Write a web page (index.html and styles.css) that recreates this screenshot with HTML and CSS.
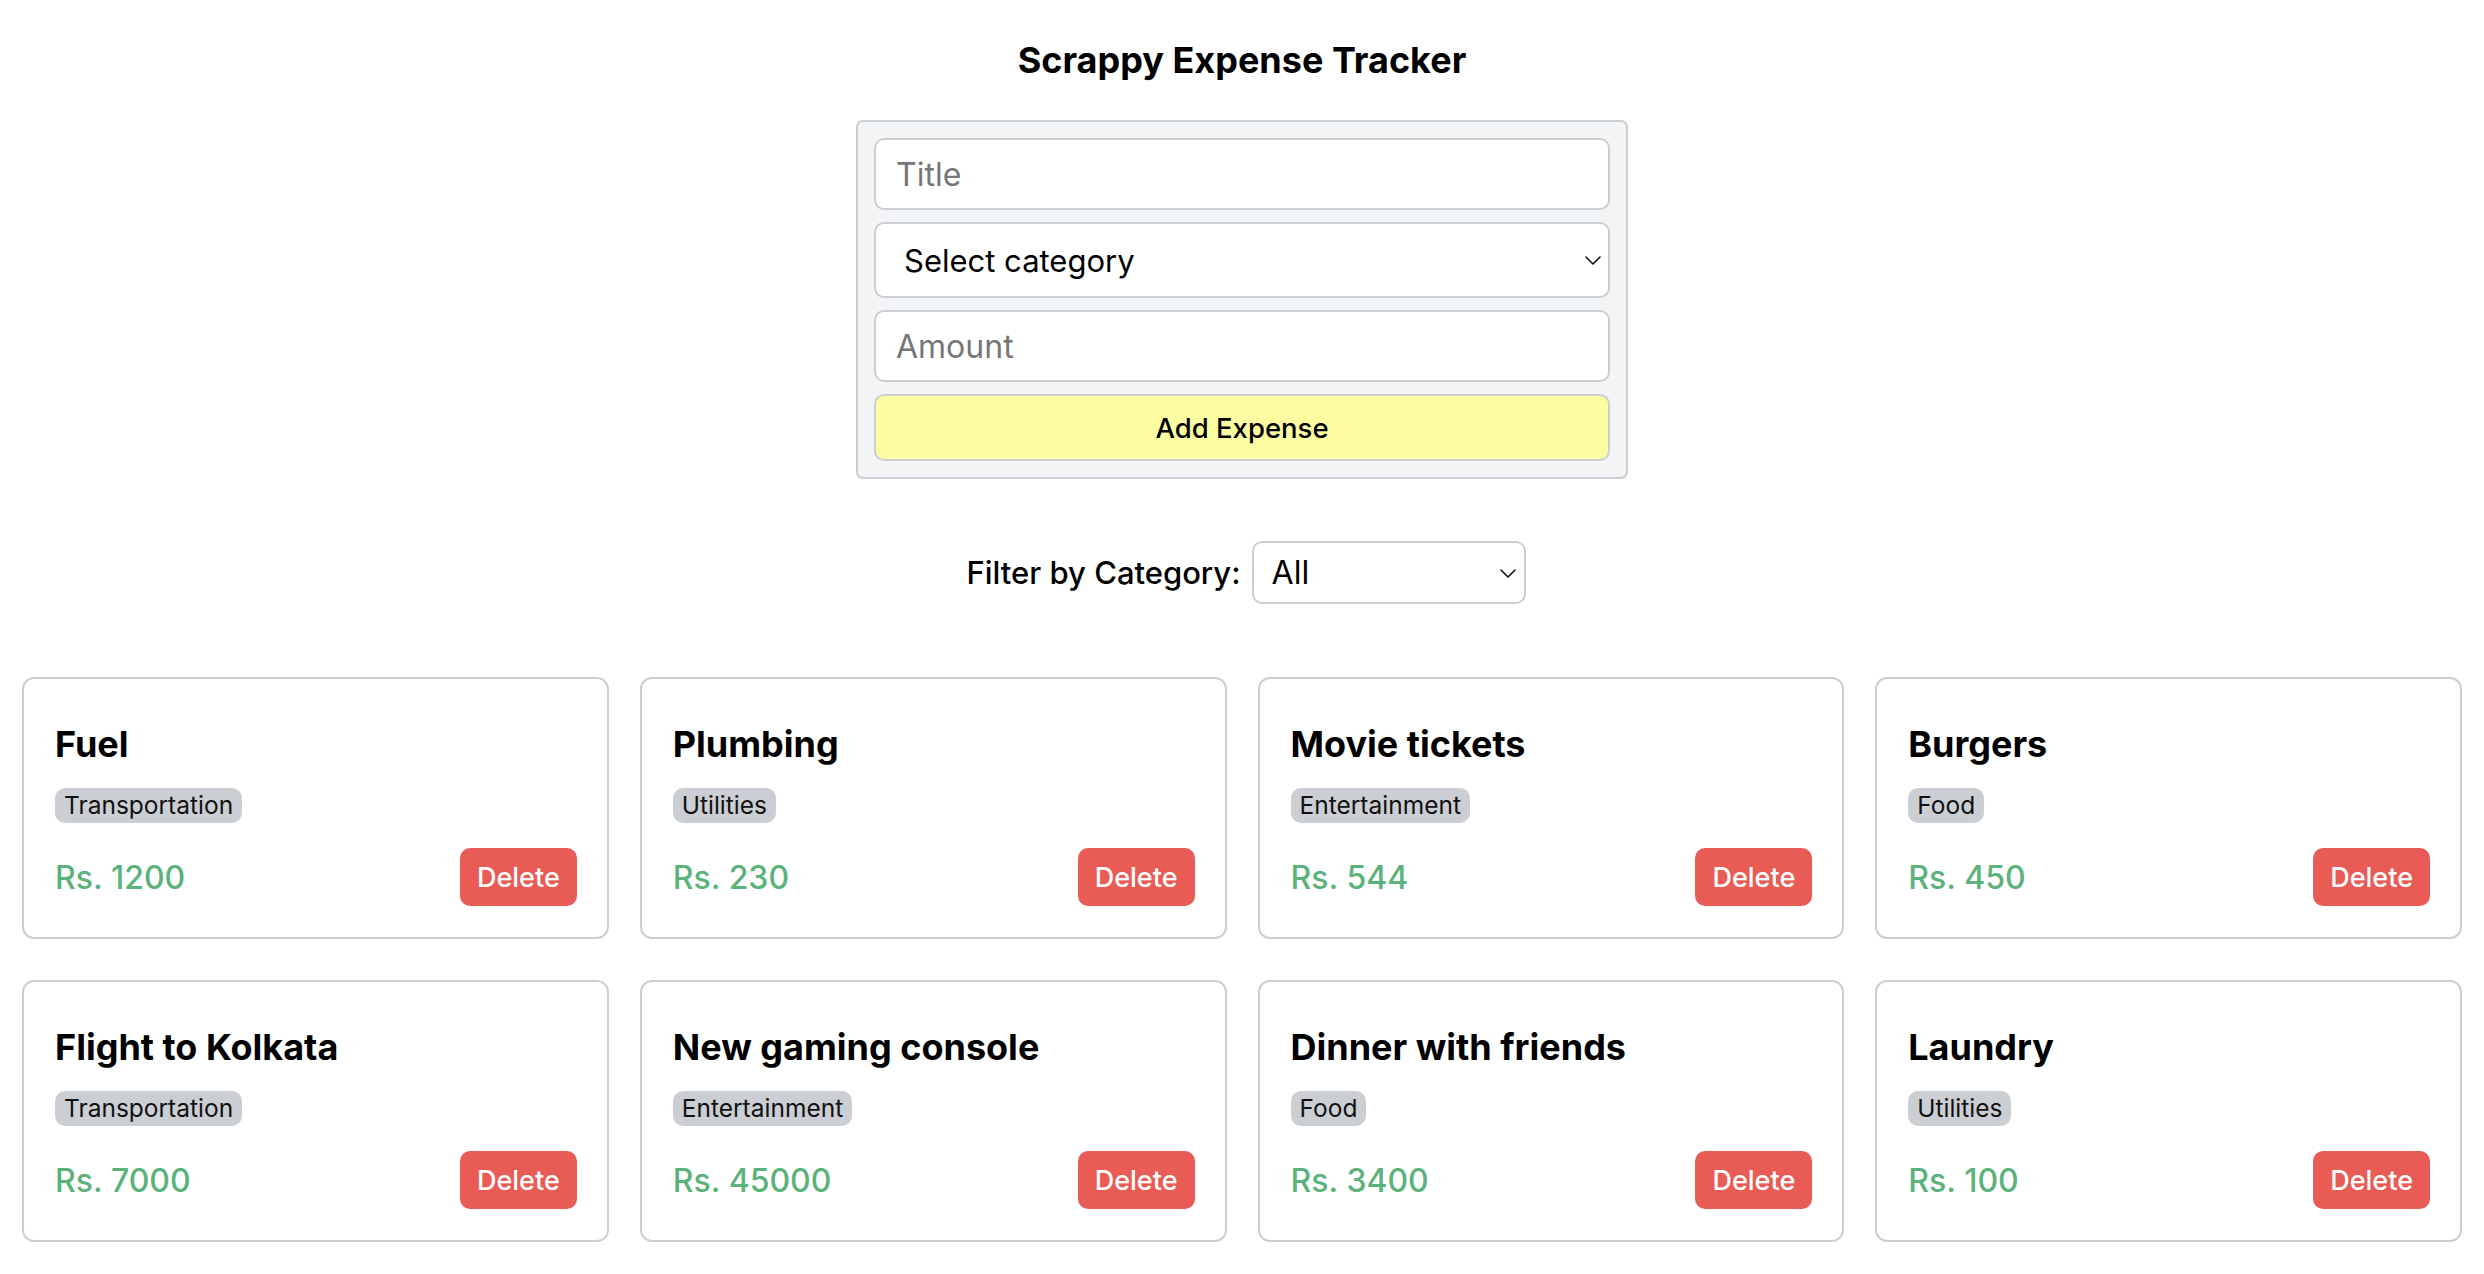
FILE: index.html
```html
<!DOCTYPE html>
<html lang="en">
<head>
<meta charset="utf-8">
<title>Scrappy Expense Tracker</title>
<link rel="stylesheet" href="styles.css">
</head>
<body>
<main class="app">
  <h1 class="app-title">Scrappy Expense Tracker</h1>

  <form class="expense-form">
    <input class="field field-input" type="text" placeholder="Title">
    <div class="select-wrap">
      <select class="field field-select">
        <option>Select category</option>
        <option>Food</option>
        <option>Transportation</option>
        <option>Utilities</option>
        <option>Entertainment</option>
      </select>
      <svg class="chevron" viewBox="0 0 16 9" width="16" height="9" aria-hidden="true"><path d="M1 1l7 7 7-7" fill="none" stroke="#111" stroke-width="1.6" stroke-linecap="round" stroke-linejoin="round"/></svg>
    </div>
    <input class="field field-input" type="text" placeholder="Amount">
    <button type="button" class="add-btn">Add Expense</button>
  </form>

  <div class="filter">
    <label class="filter-label" for="filter">Filter by Category:</label>
    <div class="select-wrap">
      <select id="filter" class="filter-select">
        <option>All</option>
        <option>Food</option>
        <option>Transportation</option>
        <option>Utilities</option>
        <option>Entertainment</option>
      </select>
      <svg class="chevron chevron-filter" viewBox="0 0 16 9" width="16" height="9" aria-hidden="true"><path d="M1 1l7 7 7-7" fill="none" stroke="#111" stroke-width="1.6" stroke-linecap="round" stroke-linejoin="round"/></svg>
    </div>
  </div>

  <section class="cards">
    <article class="card">
      <h2 class="card-title">Fuel</h2>
      <span class="badge">Transportation</span>
      <div class="card-row"><span class="amount">Rs. 1200</span><button type="button" class="delete-btn">Delete</button></div>
    </article>
    <article class="card">
      <h2 class="card-title">Plumbing</h2>
      <span class="badge">Utilities</span>
      <div class="card-row"><span class="amount">Rs. 230</span><button type="button" class="delete-btn">Delete</button></div>
    </article>
    <article class="card">
      <h2 class="card-title">Movie tickets</h2>
      <span class="badge">Entertainment</span>
      <div class="card-row"><span class="amount">Rs. 544</span><button type="button" class="delete-btn">Delete</button></div>
    </article>
    <article class="card">
      <h2 class="card-title">Burgers</h2>
      <span class="badge">Food</span>
      <div class="card-row"><span class="amount">Rs. 450</span><button type="button" class="delete-btn">Delete</button></div>
    </article>
    <article class="card">
      <h2 class="card-title">Flight to Kolkata</h2>
      <span class="badge">Transportation</span>
      <div class="card-row"><span class="amount">Rs. 7000</span><button type="button" class="delete-btn">Delete</button></div>
    </article>
    <article class="card">
      <h2 class="card-title">New gaming console</h2>
      <span class="badge">Entertainment</span>
      <div class="card-row"><span class="amount">Rs. 45000</span><button type="button" class="delete-btn">Delete</button></div>
    </article>
    <article class="card">
      <h2 class="card-title">Dinner with friends</h2>
      <span class="badge">Food</span>
      <div class="card-row"><span class="amount">Rs. 3400</span><button type="button" class="delete-btn">Delete</button></div>
    </article>
    <article class="card">
      <h2 class="card-title">Laundry</h2>
      <span class="badge">Utilities</span>
      <div class="card-row"><span class="amount">Rs. 100</span><button type="button" class="delete-btn">Delete</button></div>
    </article>
  </section>
</main>
</body>
</html>
```

FILE: styles.css
```css
html, body {
  margin: 0;
  padding: 0;
  background: #ffffff;
  color: #000000;
  font-family: Inter, "Liberation Sans", Arial, sans-serif;
}

.app {
  padding: 32px 22px 32px;
}

.app-title {
  margin: 0 0 32px;
  text-align: center;
  font-size: 36px;
  line-height: 56px;
  font-weight: 700;
}

.expense-form {
  box-sizing: border-box;
  width: 772px;
  margin: 0 auto;
  padding: 16px;
  background: #f3f4f6;
  border: 2px solid #cbced3;
  border-radius: 7px;
  display: flex;
  flex-direction: column;
  gap: 12px;
}

.field {
  box-sizing: border-box;
  display: block;
  width: 100%;
  height: 72px;
  padding: 0 20px;
  border: 2px solid #cbced3;
  border-radius: 10px;
  background: #ffffff;
  color: #000000;
  font-family: inherit;
  font-size: 32px;
  outline: none;
}

.field::placeholder {
  color: #767676;
}

.select-wrap {
  position: relative;
}

.field-select {
  height: 76px;
  padding-left: 28px;
  font-size: 31px;
  appearance: none;
  -webkit-appearance: none;
}

.chevron {
  position: absolute;
  right: 9px;
  top: 50%;
  margin-top: -4px;
  pointer-events: none;
}

.chevron-filter {
  right: 10px;
}

.add-btn {
  box-sizing: border-box;
  height: 67px;
  border: 2px solid #cbced3;
  border-radius: 10px;
  background: #fcfca1;
  color: #000000;
  font-family: inherit;
  font-size: 27.5px;
  font-weight: 500;
}

.filter {
  margin-top: 62px;
  display: flex;
  justify-content: center;
  align-items: center;
  gap: 11px;
  padding-left: 8px;
}

.filter-label {
  font-size: 31px;
  font-weight: 500;
}

.filter-select {
  box-sizing: border-box;
  display: block;
  width: 274px;
  height: 63px;
  padding: 0 18px;
  border: 2px solid #cbced3;
  border-radius: 10px;
  background: #ffffff;
  color: #000000;
  font-family: inherit;
  font-size: 32px;
  appearance: none;
  -webkit-appearance: none;
  outline: none;
}

.cards {
  margin-top: 73px;
  display: grid;
  grid-template-columns: repeat(4, 1fr);
  column-gap: 31px;
  row-gap: 41px;
}

.card {
  box-sizing: border-box;
  padding: 32px 30px 31px 31px;
  border: 2px solid #cbced3;
  border-radius: 12px;
  background: #ffffff;
  display: flex;
  flex-direction: column;
  align-items: flex-start;
}

.card-title {
  margin: 5px 0 16px;
  font-size: 36px;
  line-height: 56px;
  font-weight: 700;
}

.badge {
  display: inline-block;
  padding: 0 9px;
  border-radius: 10px;
  background: #cbced3;
  color: #111111;
  font-size: 24.5px;
  line-height: 35px;
}

.card-row {
  align-self: stretch;
  margin-top: 25px;
  display: flex;
  justify-content: space-between;
  align-items: center;
}

.amount {
  color: #5cb27b;
  font-size: 32px;
  font-weight: 500;
}

.delete-btn {
  height: 58px;
  padding: 0 17px;
  border: none;
  border-radius: 10px;
  background: #e95b55;
  color: #ffffff;
  font-family: inherit;
  font-size: 27px;
  font-weight: 500;
}
```
